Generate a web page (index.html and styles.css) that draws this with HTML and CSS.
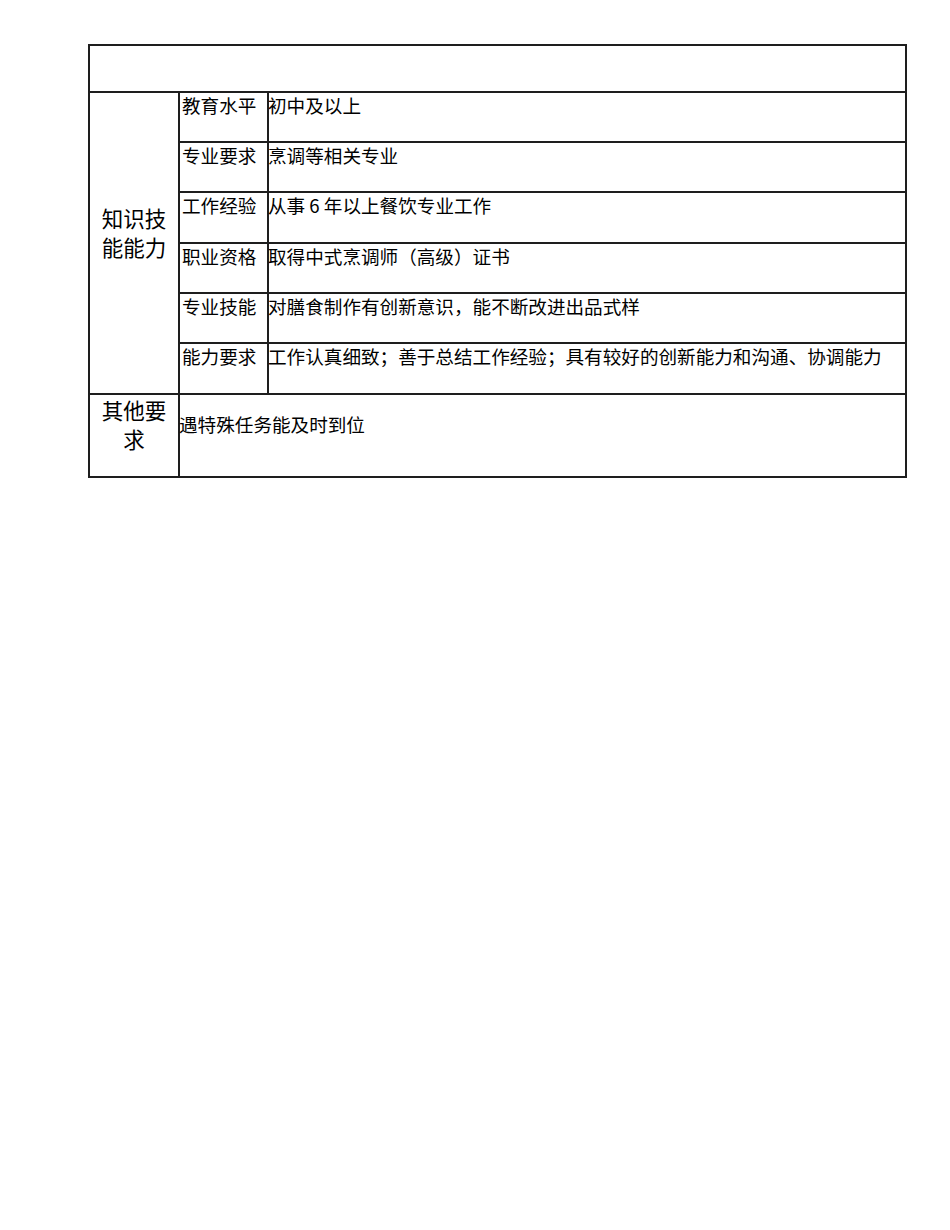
FILE: index.html
```html
<!DOCTYPE html>
<html lang="zh-CN">
<head>
<meta charset="utf-8">
<title>岗位要求</title>
<link rel="stylesheet" href="styles.css">
</head>
<body>
<div class="sheet">
  <div class="cell head"></div>

  <div class="cell group">知识技<br>能能力</div>

  <div class="cell label">教育水平</div>
  <div class="cell value">初中及以上</div>

  <div class="cell label">专业要求</div>
  <div class="cell value">烹调等相关专业</div>

  <div class="cell label">工作经验</div>
  <div class="cell value">从事 6 年以上餐饮专业工作</div>

  <div class="cell label">职业资格</div>
  <div class="cell value">取得中式烹调师（高级）证书</div>

  <div class="cell label">专业技能</div>
  <div class="cell value">对膳食制作有创新意识，能不断改进出品式样</div>

  <div class="cell label">能力要求</div>
  <div class="cell value">工作认真细致；善于总结工作经验；具有较好的创新能力和沟通、协调能力</div>

  <div class="cell other-label">其他要<br>求</div>
  <div class="cell other-value">遇特殊任务能及时到位</div>
</div>
</body>
</html>
```

FILE: styles.css
```css
html, body {
  margin: 0;
  padding: 0;
  background: #ffffff;
}

body {
  font-family: "Noto Sans CJK SC", "Noto Sans", sans-serif;
  color: #000000;
}

.sheet {
  display: grid;
  grid-template-columns: 90px 89px 638px;
  grid-template-rows: 47px 50px 50px 51px 50px 50px 51px 83px;
  width: max-content;
  margin: 44px 0 0 88px;
  border-left: 2px solid #1e1e1e;
  border-top: 2px solid #1e1e1e;
}

.cell {
  box-sizing: border-box;
  border-right: 2px solid #1e1e1e;
  border-bottom: 2px solid #1e1e1e;
  font-size: 18.6px;
  line-height: 24px;
  white-space: nowrap;
  overflow: visible;
}

.head {
  grid-column: 1 / 4;
}

.group {
  grid-column: 1;
  grid-row: 2 / 8;
  display: flex;
  flex-direction: column;
  justify-content: center;
  padding-bottom: 23px;
  text-align: center;
  font-size: 21.5px;
  line-height: 29px;
}

.label {
  grid-column: 2;
  padding: 0 0 0 2px;
}

.value {
  grid-column: 3;
  padding: 0;
  text-indent: -1px;
}

.other-label {
  grid-column: 1;
  grid-row: 8;
  text-align: center;
  font-size: 21.5px;
  line-height: 29px;
  padding-top: 0;
}

.other-value {
  grid-column: 2 / 4;
  grid-row: 8;
  padding-top: 17px;
  text-indent: -1px;
}
```
